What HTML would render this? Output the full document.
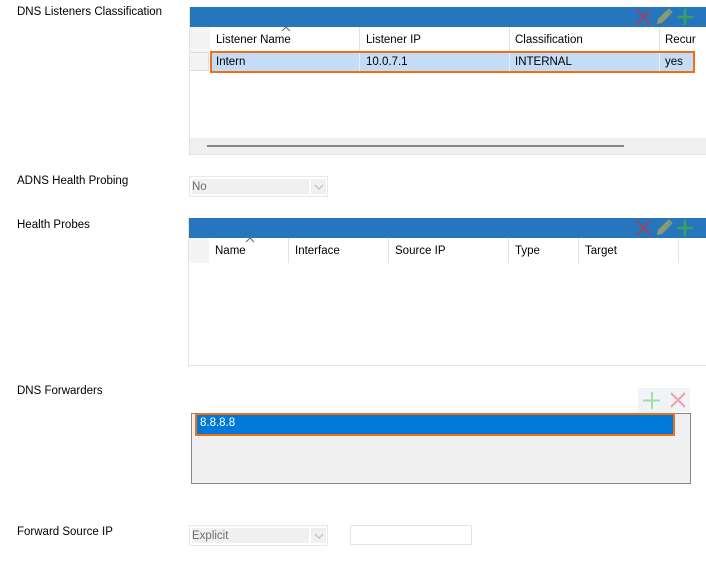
<!DOCTYPE html>
<html><head><style>
body{margin:0;width:706px;height:575px;background:#fff;font-family:"Liberation Sans",sans-serif;font-size:12px;color:#000;position:relative;overflow:hidden}
.a{position:absolute}
.lbl{position:absolute;left:17px;font-size:11.5px}
.blue{background:#2576bc}
.hd{position:absolute;top:0;height:100%;border-right:1px solid #e3e3e3}
.t{position:absolute;white-space:nowrap;font-size:11.5px}
</style></head><body>
<div class="lbl" style="top:6px">DNS Listeners Classification</div>
<div class="lbl" style="top:175px">ADNS Health Probing</div>
<div class="lbl" style="top:219px">Health Probes</div>
<div class="lbl" style="top:385px">DNS Forwarders</div>
<div class="lbl" style="top:526px">Forward Source IP</div>

<!-- grid 1 -->
<div class="a" style="left:189px;top:7px;width:517px;height:148px;border-left:1px solid #e8e4d8;border-bottom:1px solid #e8e4d8;box-sizing:border-box"></div>
<div class="a blue" style="left:190px;top:7px;width:516px;height:20px"></div>
<svg class="a" style="left:634px;top:8px" width="72" height="18">
<path d="M3 2L16 16M16 2L3 16" stroke="#a0435e" stroke-width="2"/>
<path d="M23 16l1-5 9-9 4 4-9 9z" fill="#8c9a70"/><path d="M34 1l4 4" stroke="#8c9a70" stroke-width="2"/>
<path d="M51 1v16M43 9h16" stroke="#3da15e" stroke-width="2.5"/>
</svg>
<div class="a" style="left:190px;top:27px;width:20px;height:25px;background:#f4f4f4"></div>
<div class="a" style="left:210px;top:27px;width:496px;height:25px">
<div class="hd" style="left:0;width:149px"></div><div class="hd" style="left:150px;width:149px"></div><div class="hd" style="left:300px;width:149px"></div>
</div>
<svg class="a" style="left:281px;top:26px" width="10" height="6"><path d="M1 5l4-4 4 4" stroke="#666" fill="none"/></svg>
<div class="t" style="left:216px;top:34px">Listener Name</div>
<div class="t" style="left:366px;top:34px">Listener IP</div>
<div class="t" style="left:515px;top:34px">Classification</div>
<div class="t" style="left:665px;top:34px">Recur</div>
<div class="a" style="left:190px;top:52px;width:19px;height:19px;border:1px solid #ddd;border-left:0;background:#f4f4f4;box-sizing:border-box"></div>
<div class="a" style="left:210px;top:51px;width:485px;height:22px;background:#c3dcf7;border:2px solid #f36f13;box-sizing:border-box"></div>
<div class="a" style="left:359px;top:53px;width:1px;height:18px;background:#e8eef6"></div>
<div class="a" style="left:509px;top:53px;width:1px;height:18px;background:#e8eef6"></div>
<div class="a" style="left:659px;top:53px;width:1px;height:18px;background:#e8eef6"></div>
<div class="t" style="left:216px;top:56px">Intern</div>
<div class="t" style="left:366px;top:56px">10.0.7.1</div>
<div class="t" style="left:515px;top:56px">INTERNAL</div>
<div class="t" style="left:665px;top:56px">yes</div>
<div class="a" style="left:190px;top:138px;width:516px;height:16px;background:#f0f0f0"></div>
<div class="a" style="left:207px;top:145px;width:417px;height:2px;background:#858585"></div>

<!-- combo No -->
<div class="a" style="left:189px;top:176px;width:139px;height:21px;border:1px solid #e8e8e8;box-sizing:border-box"></div>
<div class="a" style="left:192px;top:179px;width:117px;height:15px;background:#f0f0f0"></div>
<div class="a" style="left:311px;top:179px;width:15px;height:15px;background:#f0f0f0"></div>
<div class="t" style="left:192px;top:181px;color:#6d6d6d">No</div>
<svg class="a" style="left:314px;top:184px" width="10" height="6"><path d="M1 1l4 4 4-4" stroke="#bbb" fill="none"/></svg>

<!-- grid 2 -->
<div class="a" style="left:188px;top:218px;width:518px;height:148px;border-left:1px solid #e8e4d8;border-bottom:1px solid #e8e4d8;box-sizing:border-box"></div>
<div class="a blue" style="left:189px;top:218px;width:517px;height:20px"></div>
<svg class="a" style="left:634px;top:219px" width="72" height="18">
<path d="M3 2L16 16M16 2L3 16" stroke="#a0435e" stroke-width="2"/>
<path d="M23 16l1-5 9-9 4 4-9 9z" fill="#8c9a70"/><path d="M34 1l4 4" stroke="#8c9a70" stroke-width="2"/>
<path d="M51 1v16M43 9h16" stroke="#3da15e" stroke-width="2.5"/>
</svg>
<div class="a" style="left:189px;top:238px;width:20px;height:25px;background:#f4f4f4"></div>
<div class="a" style="left:209px;top:238px;width:497px;height:25px">
<div class="hd" style="left:0;width:79px"></div><div class="hd" style="left:80px;width:99px"></div><div class="hd" style="left:180px;width:119px"></div><div class="hd" style="left:300px;width:69px"></div><div class="hd" style="left:370px;width:99px"></div>
</div>
<svg class="a" style="left:245px;top:237px" width="10" height="6"><path d="M1 5l4-4 4 4" stroke="#666" fill="none"/></svg>
<div class="t" style="left:215px;top:245px">Name</div>
<div class="t" style="left:295px;top:245px">Interface</div>
<div class="t" style="left:395px;top:245px">Source IP</div>
<div class="t" style="left:515px;top:245px">Type</div>
<div class="t" style="left:585px;top:245px">Target</div>

<!-- forwarders -->
<div class="a" style="left:638px;top:388px;width:52px;height:24px;background:#f0f4f8"></div>
<svg class="a" style="left:640px;top:390px" width="50" height="20">
<path d="M12 2v17M3 10.5h17" stroke="#a6dca6" stroke-width="2"/>
<path d="M31 3l14 14M45 3L31 17" stroke="#f3a0a0" stroke-width="2"/>
</svg>
<div class="a" style="left:191px;top:413px;width:500px;height:71px;background:#f0f0f0;border:1px solid #888;box-sizing:border-box"></div>
<div class="a" style="left:195px;top:413px;width:480px;height:23px;background:#0078d7;border:2px solid #f36f13;box-sizing:border-box"></div>
<div class="t" style="left:200px;top:417px;color:#fff">8.8.8.8</div>

<!-- Explicit -->
<div class="a" style="left:189px;top:525px;width:139px;height:21px;border:1px solid #e8e8e8;box-sizing:border-box"></div>
<div class="a" style="left:192px;top:528px;width:117px;height:15px;background:#f0f0f0"></div>
<div class="a" style="left:311px;top:528px;width:15px;height:15px;background:#f0f0f0"></div>
<div class="t" style="left:192px;top:530px;color:#6d6d6d">Explicit</div>
<svg class="a" style="left:314px;top:533px" width="10" height="6"><path d="M1 1l4 4 4-4" stroke="#bbb" fill="none"/></svg>
<div class="a" style="left:350px;top:525px;width:122px;height:20px;border:1px solid #e3e3e3;border-radius:2px;box-sizing:border-box"></div>
</body></html>
